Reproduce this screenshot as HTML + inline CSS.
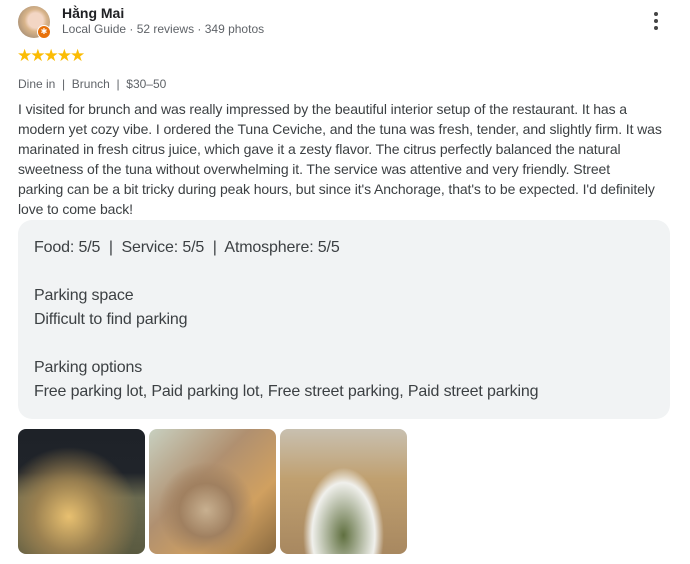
<!DOCTYPE html>
<html><head><meta charset="utf-8"><style>
body{margin:0;background:#fff;font-family:"Liberation Sans",Roboto,Arial,sans-serif;color:#202124;width:690px;height:564px;overflow:hidden;position:relative}
.abs{position:absolute}
.av{left:18px;top:6px;width:32px;height:32px;border-radius:50%;background:radial-gradient(circle at 55% 45%,#f3d6c4 0 30%,#d8b48a 45%,#8a7a6a 100%)}
.badge{left:37px;top:25px;width:12px;height:12px;border-radius:50%;background:#e8710a;border:1px solid #fff;color:#fff;font-size:8px;line-height:12px;text-align:center}
.name{left:62px;top:5px;font-size:14px;font-weight:bold}
.sub{left:62px;top:22px;font-size:12px;color:#5f6368}
.stars{left:17px;top:46px;color:#fbbc04;font-size:17px;letter-spacing:-2px}
.meta{left:18px;top:77px;font-size:12px;color:#5f6368}
.txt{left:18px;top:99px;white-space:nowrap;font-size:14px;line-height:20px;color:#3c4043;letter-spacing:-0.1px}
.box{left:18px;top:220px;width:652px;height:199px;background:#f1f3f4;border-radius:14px}
.bt{left:34px;top:236px;font-size:16px;line-height:24px;color:#3c4043;letter-spacing:-0.15px}
.ph{top:429px;width:127px;height:125px;border-radius:8px}
.dots{left:654px;top:12px;width:4px}
.dots i{display:block;width:4px;height:4px;border-radius:50%;background:#444;margin-bottom:3px}
</style></head><body>
<div class="abs av"></div><div class="abs badge">✱</div>
<div class="abs name">Hằng Mai</div>
<div class="abs sub">Local Guide · 52 reviews · 349 photos</div>
<div class="abs dots"><i></i><i></i><i></i></div>
<div class="abs stars">★★★★★</div>
<div class="abs meta">Dine in &nbsp;|&nbsp; Brunch &nbsp;|&nbsp; $30–50</div>
<div class="abs txt">I visited for brunch and was really impressed by the beautiful interior setup of the restaurant. It has a<br>modern yet cozy vibe. I ordered the Tuna Ceviche, and the tuna was fresh, tender, and slightly firm. It was<br>marinated in fresh citrus juice, which gave it a zesty flavor. The citrus perfectly balanced the natural<br>sweetness of the tuna without overwhelming it. The service was attentive and very friendly. Street<br>parking can be a bit tricky during peak hours, but since it's Anchorage, that's to be expected. I'd definitely<br>love to come back!</div>
<div class="abs box"></div>
<div class="abs bt">Food: 5/5 &nbsp;|&nbsp; Service: 5/5 &nbsp;|&nbsp; Atmosphere: 5/5<br><br>Parking space<br>Difficult to find parking<br><br>Parking options<br>Free parking lot, Paid parking lot, Free street parking, Paid street parking</div>
<div class="abs ph" style="left:18px;background:radial-gradient(circle at 40% 70%,#e8c070 0,#9a8050 30%,transparent 60%),linear-gradient(#1e2228 0,#20242a 35%,#6a6a50 55%,#5a5a40 100%)"></div>
<div class="abs ph" style="left:149px;background:radial-gradient(circle at 45% 65%,#c8b090 0,#a08060 25%,transparent 45%),linear-gradient(135deg,#c8d0c0 0,#b09070 40%,#d0a060 70%,#8a6a40 100%)"></div>
<div class="abs ph" style="left:280px;background:radial-gradient(ellipse at 50% 85%,#607040 0,#f0f0ec 35%,transparent 45%),linear-gradient(#c8c0b0 0,#c0a070 40%,#a88860 100%)"></div>
</body></html>
